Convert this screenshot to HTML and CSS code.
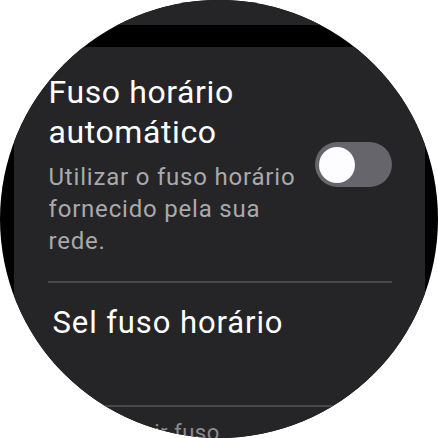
FILE: index.html
```html
<!DOCTYPE html>
<html lang="pt">
<head>
<meta charset="utf-8">
<link rel="stylesheet" href="styles.css">
</head>
<body>
<div class="watch">
  <div class="top-card"></div>
  <div class="card">
    <div class="item item-toggle">
      <div class="texts">
        <div class="title">Fuso horário automático</div>
        <div class="subtitle">Utilizar o fuso horário fornecido pela sua rede.</div>
      </div>
      <div class="switch"><div class="thumb"></div></div>
    </div>
    <div class="divider"></div>
    <div class="item item-plain">
      <div class="title title-2">Sel fuso horário</div>
    </div>
    <div class="divider"></div>
    <div class="item item-faded">
      <div class="title-3">Definir fuso horário</div>
    </div>
  </div>
</div>
</body>
</html>
```
FILE: styles.css
```css
html, body {
  margin: 0;
  padding: 0;
  background: #ffffff;
}
body {
  width: 438px;
  height: 438px;
  font-family: Roboto, "Noto Sans", sans-serif;
}
.watch {
  width: 438px;
  height: 438px;
  border-radius: 50%;
  background: #000000;
  overflow: hidden;
  display: flex;
  flex-direction: column;
  align-items: center;
}
.top-card {
  flex: none;
  width: 411px;
  height: 25px;
  background: #252527;
  border-radius: 0 0 145px 145px;
}
.card {
  flex: none;
  margin-top: 22px;
  width: 411px;
  background: #252527;
  border-radius: 26px;
}
.item-toggle {
  display: flex;
  align-items: center;
  padding: 25px 33px 24px 35px;
}
.texts {
  width: 262px;
  flex: none;
}
.title {
  color: #ffffff;
  font-size: 32px;
  line-height: 40px;
  letter-spacing: 0.6px;
}
.subtitle {
  margin-top: 9px;
  color: #a9a9ad;
  font-size: 24px;
  line-height: 32px;
  letter-spacing: 0.8px;
}
.switch {
  margin-left: auto;
  width: 77px;
  height: 45px;
  border-radius: 23px;
  background: #66656b;
  display: flex;
  align-items: center;
  padding-left: 4px;
  box-sizing: border-box;
}
.thumb {
  width: 36px;
  height: 36px;
  border-radius: 50%;
  background: #fdfcff;
}
.divider {
  height: 2px;
  margin: 0 33px 0 34px;
  background: #48484b;
}
.item-plain {
  padding: 20px 33px 62px 39px;
}
.title-2 {
  font-size: 31px;
  letter-spacing: 0.9px;
}
.item-faded {
  padding: 9px 33px 0 87px;
}
.title-3 {
  width: 140px;
  color: #8c8c8f;
  font-size: 22px;
  line-height: 34px;
  letter-spacing: 0.5px;
}
```
